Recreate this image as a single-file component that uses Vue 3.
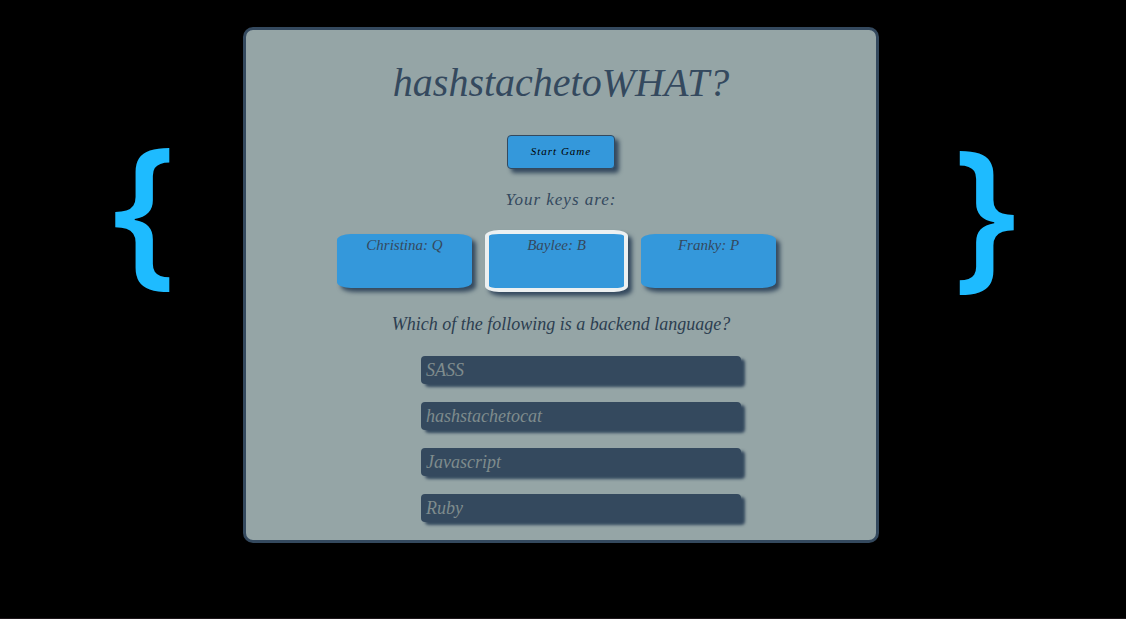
<script setup>
const players = [
  { name: 'Christina', key: 'Q', active: false },
  { name: 'Baylee', key: 'B', active: true },
  { name: 'Franky', key: 'P', active: false }
]
const answers = ['SASS', 'hashstachetocat', 'Javascript', 'Ruby']
</script>

<template>
  <div class="page">
    <div class="brace left" aria-hidden="true">{</div>
    <main class="card">
      <h1>hashstachetoWHAT?</h1>
      <button type="button" class="start">Start Game</button>
      <h2>Your keys are:</h2>
      <div class="players">
        <div v-for="p in players" :key="p.key" class="player" :class="{ active: p.active }">
          {{ p.name }}: {{ p.key }}
        </div>
      </div>
      <p class="question">Which of the following is a backend language?</p>
      <ul class="answers">
        <li v-for="a in answers" :key="a">{{ a }}</li>
      </ul>
    </main>
    <div class="brace right" aria-hidden="true">}</div>
  </div>
</template>

<style>
body {
  margin: 0;
  background: #000;
}
</style>

<style scoped>
.page {
  box-sizing: border-box;
  min-height: 100vh;
  padding-top: 27px;
  display: grid;
  grid-template-columns: 243fr 636fr 247fr;
  align-items: start;
  border-bottom: 1px solid #1c1519;
  font-family: "Liberation Serif", serif;
  font-style: italic;
  color: #34495e;
}
.brace {
  font: 600 165px/160px "Open Sans", sans-serif;
  color: #1ebbff;
}
.left {
  padding: 95px 0 0 44px;
  text-align: center;
}
.right {
  padding: 98px 34px 0 0;
  text-align: center;
}
.card {
  box-sizing: border-box;
  min-width: 0;
  padding: 28px 0 18px;
  border: 3px solid #34495e;
  border-radius: 10px;
  background: #95a5a6;
  display: flex;
  flex-direction: column;
  align-items: center;
}
h1 {
  margin: 0 0 27px;
  font-size: 40px;
  line-height: 50px;
  font-weight: normal;
}
.start {
  width: 108px;
  height: 34px;
  padding: 0 0 3px;
  border: 1px solid #34495e;
  border-radius: 4px;
  background: #3498db;
  box-shadow: 4px 4px 4px #34495e;
  color: #000;
  font: italic 11px/16px "Liberation Serif", serif;
  letter-spacing: 1px;
}
h2 {
  margin: 19px 0 22px;
  font-size: 17px;
  line-height: 24px;
  font-weight: normal;
  letter-spacing: 1px;
}
.players {
  display: flex;
  gap: 17px;
  padding-right: 9px;
}
.player {
  width: 135px;
  height: 54px;
  border-radius: 14px / 6px;
  background: #3498db;
  box-shadow: 4px 4px 4px #34495e;
  font-size: 15px;
  line-height: 22px;
  text-align: center;
}
.player.active {
  margin: -4px;
  border: 4px solid #ecf0f1;
}
.question {
  margin: 24px 0 20px;
  font-size: 18px;
  line-height: 24px;
  color: #2c3e50;
}
.answers {
  width: 320px;
  margin: 0;
  padding: 0 0 0 40px;
  list-style: none;
  display: grid;
  gap: 18px;
}
.answers li {
  padding-left: 5px;
  border-radius: 4px;
  background: #34495e;
  box-shadow: 4px 3px 3px #34495e;
  color: #7f8c8d;
  font-size: 18px;
  line-height: 28px;
}
</style>
